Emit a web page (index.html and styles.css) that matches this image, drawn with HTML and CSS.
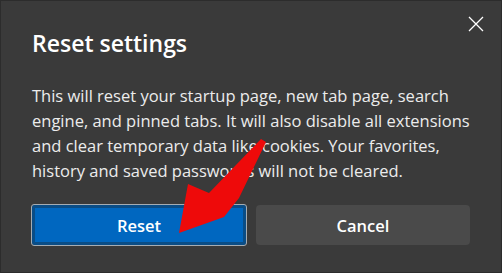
FILE: index.html
```html
<!DOCTYPE html>
<html lang="en">
<head>
    <meta charset="UTF-8">
    <meta name="viewport" content="width=device-width, initial-scale=1.0">
    <title>Reset settings</title>
    <link rel="stylesheet" href="styles.css">
</head>
<body>
    <div class="dialog">
        <button class="close" aria-label="Close">
            <svg width="16" height="16" viewBox="0 0 16 16">
                <path d="M1 1 L15 15 M15 1 L1 15" stroke="#ffffff" stroke-width="1.3" fill="none"/>
            </svg>
        </button>
        <h1 class="title">Reset settings</h1>
        <p class="message">This will reset your startup page, new tab page, search engine, and pinned tabs. It will also disable all extensions and clear temporary data like cookies. Your favorites, history and saved passwords will not be cleared.</p>
        <div class="actions">
            <button class="btn btn-primary">Reset</button>
            <button class="btn btn-secondary">Cancel</button>
        </div>

        <!-- red pointer drawn over the screenshot -->
        <svg class="pointer" width="502" height="273" viewBox="0 0 502 273">
            <polygon points="261,139 266,142 239,198 224,217 179,233 188,184 209,193" fill="#ee0a0a"/>
        </svg>
    </div>
</body>
</html>
```

FILE: styles.css
```css
* {
    box-sizing: border-box;
}
html, body {
    margin: 0;
    padding: 0;
}
body {
    width: 502px;
    height: 273px;
    background-color: #2b2b2b;
    font-family: "Open Sans", "Noto Sans", Arial, sans-serif;
    overflow: hidden;
}
.dialog {
    position: relative;
    width: 502px;
    height: 273px;
    background-color: #3a3a3a;
    border: 1px solid #2c2c2c;
    padding: 25px 31px 0 31px;
    color: #f2f2f2;
}
.close {
    position: absolute;
    top: 15px;
    right: 17px;
    background: none;
    border: none;
    padding: 0;
    width: 16px;
    height: 16px;
    cursor: pointer;
}
.close svg {
    display: block;
}
.title {
    margin: 0;
    font-size: 23px;
    font-weight: 600;
    line-height: 34px;
    color: #ffffff;
}
.message {
    margin: 23px 0 0 0;
    font-size: 16.5px;
    line-height: 25px;
    color: #ececec;
}
.actions {
    display: grid;
    grid-template-columns: 1fr 1fr;
    gap: 10px;
    margin-top: 22px;
}
.btn {
    height: 40px;
    border-radius: 4px;
    font-family: inherit;
    font-size: 16.5px;
    font-weight: 600;
    cursor: pointer;
}
.btn-primary {
    background-color: #0067c0;
    color: #ffffff;
    border: 3px solid #0a4d86;
    outline: 1px solid #a4acb3;
    border-radius: 2px;
}
.btn-secondary {
    background-color: #4a4a4a;
    color: #ffffff;
    border: none;
}
.pointer {
    position: absolute;
    top: -1px;
    left: -1px;
    pointer-events: none;
}
```
